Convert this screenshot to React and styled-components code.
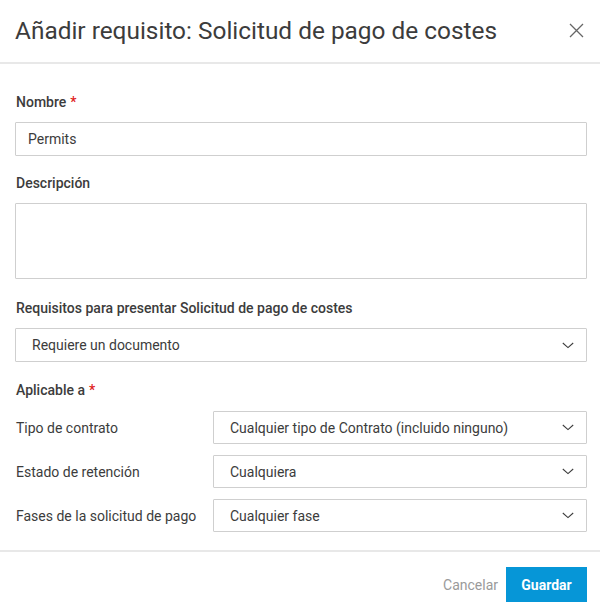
import React from "react";
import styled, { createGlobalStyle } from "styled-components";

const Global = createGlobalStyle`
  html, body { margin: 0; padding: 0; background: #fff; }
  body { font-family: Roboto, "Noto Sans", "Liberation Sans", sans-serif; color: #3c3c3c; }
  * { box-sizing: border-box; }
`;

const Dialog = styled.div`
  width: 600px;
  height: 616px;
  display: flex;
  flex-direction: column;
  background: #fff;
`;

const Header = styled.header`
  height: 64px;
  display: flex;
  align-items: center;
  justify-content: space-between;
  padding: 0 16px 2px 15px;
  border-bottom: 2px solid #e8e8e8;
`;

const Title = styled.h1`
  margin: 0;
  font-size: 24.4px;
  font-weight: 400;
  color: #3c3c3c;
  letter-spacing: 0;
`;

const CloseButton = styled.button`
  border: 0;
  background: none;
  padding: 0;
  width: 16px;
  height: 16px;
  display: flex;
  align-items: center;
  justify-content: center;
  cursor: pointer;
  color: #666;
`;

const Body = styled.div`
  padding: 28px 13px 0 15px;
  display: flex;
  flex-direction: column;
`;

const Label = styled.label`
  display: block;
  font-size: 14px;
  font-weight: 500;
  line-height: 20px;
  color: #3c3c3c;
  margin-top: ${(p) => p.$top || 0}px;
  margin-bottom: ${(p) => p.$bottom ?? 10}px;
  padding-left: 1px;
`;

const Required = styled.span`
  color: #e02020;
  margin-left: 4px;
  font-weight: 500;
`;

const TextInput = styled.input`
  width: 100%;
  height: 34px;
  border: 1px solid #cfcfcf;
  border-radius: 1px;
  padding: 0 12px;
  font: inherit;
  font-size: 14px;
  color: #3c3c3c;
  outline: none;
`;

const TextArea = styled.textarea`
  width: 100%;
  height: 76px;
  border: 1px solid #cfcfcf;
  border-radius: 1px;
  resize: none;
  padding: 8px 12px;
  font: inherit;
  font-size: 14px;
  outline: none;
  display: block;
`;

const SelectBox = styled.div`
  height: ${(p) => p.$h || 33}px;
  border: 1px solid #cfcfcf;
  border-radius: 1px;
  display: flex;
  align-items: center;
  justify-content: space-between;
  padding: 0 12px 0 16px;
  font-size: 14px;
  color: #3c3c3c;
  background: #fff;
`;

const Grid = styled.div`
  display: grid;
  grid-template-columns: 198px 1fr;
  row-gap: 11px;
  align-items: center;
`;

const RowLabel = styled.span`
  font-size: 14px;
  padding-left: 1px;
  color: #3c3c3c;
`;

const Footer = styled.footer`
  margin-top: 18px;
  border-top: 2px solid #e8e8e8;
  padding: 15px 13px 0 15px;
  display: flex;
  justify-content: flex-end;
  align-items: center;
  gap: 8px;
`;

const TextButton = styled.button`
  border: 0;
  background: none;
  padding: 0;
  font: inherit;
  font-size: 14px;
  color: #9a9a9a;
  cursor: pointer;
`;

const PrimaryButton = styled.button`
  border: 0;
  background: #0696d7;
  color: #fff;
  width: 81px;
  height: 35px;
  font: inherit;
  font-size: 14px;
  font-weight: 700;
  cursor: pointer;
`;

const Chevron = () => (
  <svg width="12" height="7" viewBox="0 0 12 7" fill="none">
    <path d="M0.8 1 L6 5.6 L11.2 1" stroke="#3c3c3c" strokeWidth="1.1" />
  </svg>
);

const Select = ({ value, h }) => (
  <SelectBox $h={h}>
    <span>{value}</span>
    <Chevron />
  </SelectBox>
);

export default function App() {
  return (
    <>
      <Global />
      <Dialog>
        <Header>
          <Title>Añadir requisito: Solicitud de pago de costes</Title>
          <CloseButton aria-label="Cerrar">
            <svg width="15" height="15" viewBox="0 0 15 15">
              <path d="M1 1 L14 14 M14 1 L1 14" stroke="#666" strokeWidth="1.3" />
            </svg>
          </CloseButton>
        </Header>
        <Body>
          <Label>
            Nombre<Required>*</Required>
          </Label>
          <TextInput defaultValue="Permits" />
          <Label $top={17}>Descripción</Label>
          <TextArea />
          <Label $top={19}>Requisitos para presentar Solicitud de pago de costes</Label>
          <Select value="Requiere un documento" h={34} />
          <Label $top={18} $bottom={11}>
            Aplicable a<Required>*</Required>
          </Label>
          <Grid>
            <RowLabel>Tipo de contrato</RowLabel>
            <Select value="Cualquier tipo de Contrato (incluido ninguno)" />
            <RowLabel>Estado de retención</RowLabel>
            <Select value="Cualquiera" />
            <RowLabel>Fases de la solicitud de pago</RowLabel>
            <Select value="Cualquier fase" />
          </Grid>
        </Body>
        <Footer>
          <TextButton>Cancelar</TextButton>
          <PrimaryButton>Guardar</PrimaryButton>
        </Footer>
      </Dialog>
    </>
  );
}
